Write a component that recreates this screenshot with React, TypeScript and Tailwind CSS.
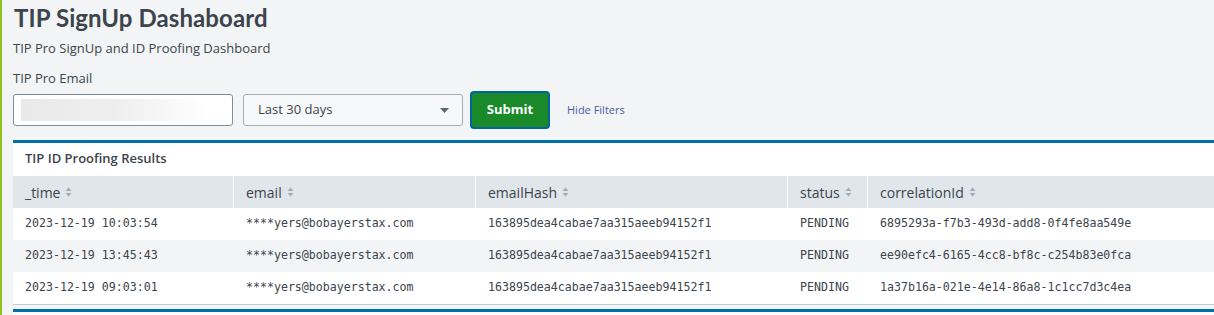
const rows = [
  {
    time: '2023-12-19 10:03:54',
    email: '****yers@bobayerstax.com',
    hash: '163895dea4cabae7aa315aeeb94152f1',
    status: 'PENDING',
    corr: '6895293a-f7b3-493d-add8-0f4fe8aa549e',
  },
  {
    time: '2023-12-19 13:45:43',
    email: '****yers@bobayerstax.com',
    hash: '163895dea4cabae7aa315aeeb94152f1',
    status: 'PENDING',
    corr: 'ee90efc4-6165-4cc8-bf8c-c254b83e0fca',
  },
  {
    time: '2023-12-19 09:03:01',
    email: '****yers@bobayerstax.com',
    hash: '163895dea4cabae7aa315aeeb94152f1',
    status: 'PENDING',
    corr: '1a37b16a-021e-4e14-86a8-1c1cc7d3c4ea',
  },
];

const columns = ['_time', 'email', 'emailHash', 'status', 'correlationId'];

function SortIcon() {
  return (
    <svg width="7" height="10" viewBox="0 0 7 10" className="ml-[5px] shrink-0">
      <path d="M3.5 0.5 L6.5 4 L0.5 4 Z" fill="#a3acb6" />
      <path d="M3.5 9.5 L6.5 6 L0.5 6 Z" fill="#a3acb6" />
    </svg>
  );
}

export default function App() {
  const sans = { fontFamily: '"Open Sans", Lato, sans-serif' };
  return (
    <div
      className="min-h-[315px] w-[1214px] overflow-hidden border-l-2 border-[#8fc31f] bg-[#f2f4f5] pl-[11px] text-[#3c444d]"
      style={sans}
    >
      <h1
        className="mt-[4px] h-[28px] pl-[1px] text-[24px] font-bold leading-[28px] tracking-[0.1px]"
        style={{ fontFamily: 'Lato, sans-serif' }}
      >
        TIP SignUp Dashaboard
      </h1>
      <p className="mt-[6px] h-[20px] text-[13px] leading-[20px]">TIP Pro SignUp and ID Proofing Dashboard</p>
      <p className="mt-[11px] h-[18px] text-[13px] leading-[18px]">TIP Pro Email</p>

      <div className="mt-[4px] flex h-[38px] items-center">
        <div className="flex h-[32px] w-[220px] items-center rounded-[3px] border border-[#818d99] bg-white px-[7px]">
          <div className="h-[22px] w-[186px] bg-gradient-to-r from-[#e9e9e9] via-[#eeeeee] to-[#ffffff]" />
        </div>
        <div className="ml-[10px] flex h-[32px] w-[220px] items-center justify-between rounded-[3px] border border-[#a6aeb7] bg-[#f7f8fa] pl-[14px] pr-[13px] text-[13px]">
          <span>Last 30 days</span>
          <svg width="9" height="5" viewBox="0 0 9 5">
            <path d="M0 0 L9 0 L4.5 5 Z" fill="#5c6773" />
          </svg>
        </div>
        <button className="ml-[7px] flex h-[38px] w-[80px] items-center justify-center rounded-[4px] border-[2px] border-[#00659c] bg-[#1a8929] text-[13px] font-bold text-white shadow-[inset_0_0_0_1px_#1a8929]">
          Submit
        </button>
        <span className="ml-[17px] text-[11px] text-[#4a5ba8]">Hide Filters</span>
      </div>

      <div className="mt-[11px] border-t-[3px] border-[#006eaa] bg-white">
        <div className="flex h-[33px] items-center pb-[2px] pl-[12px] text-[13px] font-semibold">TIP ID Proofing Results</div>
        <div className="grid grid-cols-[220px_242px_312px_80px_1fr] bg-[#e1e6eb] text-[14px]">
          {columns.map((c, i) => (
            <div
              key={c}
              className={`flex h-[32px] items-center pl-[12px] ${i > 0 ? 'border-l border-white' : ''}`}
            >
              {c}
              <SortIcon />
            </div>
          ))}
        </div>
        {rows.map((r, i) => (
          <div
            key={r.corr}
            className={`grid h-[32px] grid-cols-[220px_242px_312px_80px_1fr] items-center text-[11.6px] ${
              i % 2 === 1 ? 'bg-[#f2f4f5]' : 'bg-white'
            }`}
            style={{ fontFamily: '"DejaVu Sans Mono", "Liberation Mono", monospace' }}
          >
            <div className="pl-[12px]">{r.time}</div>
            <div className="pl-[13px]">{r.email}</div>
            <div className="pl-[13px]">{r.hash}</div>
            <div className="pl-[13px]">{r.status}</div>
            <div className="pl-[13px]">{r.corr}</div>
          </div>
        ))}
        <div className="h-px bg-[#c3cbd4]" />
      </div>
      <div className="mt-[4px] h-[3px] bg-[#006eaa]" />
      <div className="h-[10px] bg-white" />
    </div>
  );
}
